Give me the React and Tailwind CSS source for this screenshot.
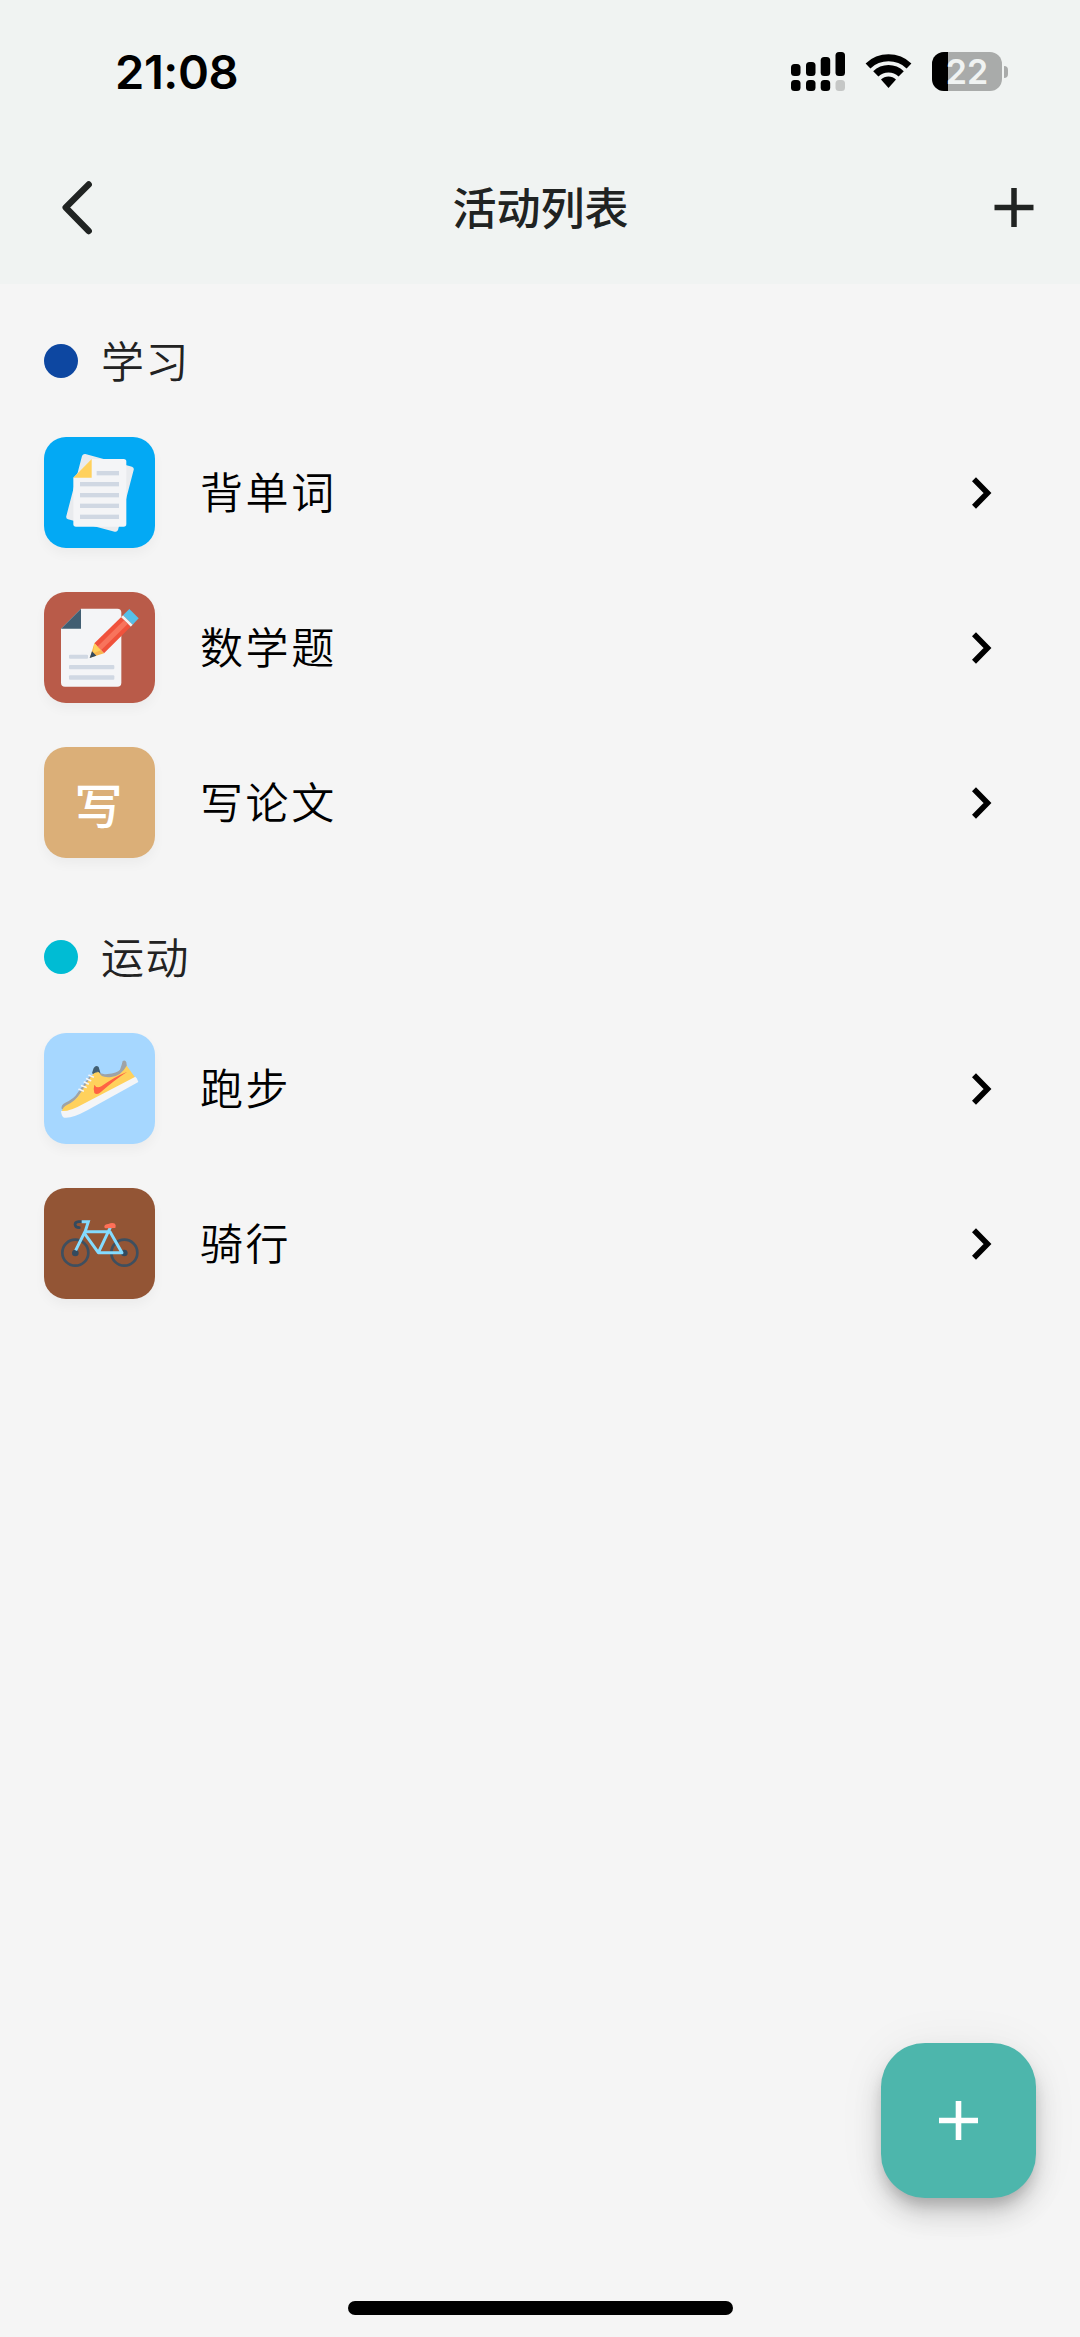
import { clsx } from 'clsx';

const WordsIcon = () => (
  <svg viewBox="0 0 333 333" className="size-full">
    <path d="M124 51 L264 89 Q271 92 269 99 L222 279 Q219 286 212 284 L72 247 Q65 244 67 237 L114 57 Q117 50 124 51Z" fill="#e9ebee" />
    <path d="M143 66 H239 Q247 66 247 74 V261 Q247 269 239 269 H96 Q88 269 88 261 V122Z" fill="#f4f5f7" />
    <path d="M143 66 V122 H88Z" fill="#ffd15c" />
    <g fill="#d0d8e3">
      <rect x="158" y="102" width="67" height="13" />
      <rect x="108" y="135" width="117" height="13" />
      <rect x="108" y="168" width="117" height="13" />
      <rect x="108" y="200" width="117" height="13" />
      <rect x="108" y="233" width="117" height="13" />
    </g>
  </svg>
);

const MathIcon = () => (
  <svg viewBox="0 0 333 333" className="size-full">
    <path d="M111 50 H220 Q232 50 232 62 V272 Q232 284 220 284 H63 Q51 284 51 272 V110Z" fill="#f4f5f7" />
    <path d="M111 50 V110 H51Z" fill="#415e72" />
    <g fill="#d0d8e3">
      <rect x="75" y="188" width="57" height="12" rx="3" />
      <rect x="75" y="219" width="136" height="13" rx="3" />
      <rect x="75" y="250" width="136" height="13" rx="3" />
    </g>
    <path d="M256 51 L284 79 L266 98 L237 70Z" fill="#56c0e8" />
    <path d="M237 70 L266 98 L260 104 L231 76Z" fill="#f2f2f2" />
    <path d="M231 76 L260 104 L180 184 L151 154Z" fill="#f0523c" />
    <path d="M240 85 L251 96 L171 175 L160 164Z" fill="#f8745c" />
    <path d="M151 154 L180 184 L138 197Z" fill="#f9b54c" />
    <path d="M151 154 L160 164 L171 175 L147 184Z" fill="#ffd15c" />
    <path d="M144 178 L157 191 L137 198Z" fill="#334a5e" />
  </svg>
);

const RunIcon = () => (
  <svg viewBox="0 0 333 333" className="size-full">
    <path d="M144 121 L149 105 Q156 95 164 102 L170 122 L160 130Z" fill="#415e72" />
    <path d="M236 84 Q244 79 247 88 L250 110 L230 136 L170 134 L158 115 Q170 126 190 123 Q220 120 228 110 Q233 98 236 84Z" fill="#9fa3a6" />
    <path d="M53 228 Q50 216 64 209 Q90 198 100 181 L140 125 L150 130 L70 232Z" fill="#9fa3a6" />
    <path d="M54 234 Q56 222 70 215 Q95 203 108 182 L142 130 Q150 116 165 118 Q170 136 202 132 Q232 128 248 98 L274 134 L272 144 L118 222 Q80 240 54 234Z" fill="#ffd15c" />
    <path d="M51 234 Q75 237 119 212 L274 131 Q279 134 283 147 L130 232 Q82 258 60 254 Q52 250 51 234Z" fill="#f4f5f7" />
    <path d="M151 155 Q158 168 172 160 Q210 132 250 116 Q215 138 168 179 Q158 186 151 180 Q147 170 151 155Z" fill="#ff6243" />
    <g stroke="#f4f5f7" strokeWidth="5" strokeLinecap="round">
      <path d="M135 127 L148 132" />
      <path d="M128 137 L140 143" />
      <path d="M121 147 L133 153" />
      <path d="M113 158 L126 163" />
      <path d="M105 169 L118 174" />
    </g>
  </svg>
);

const BikeIcon = () => (
  <svg viewBox="0 0 333 333" className="size-full" fill="none">
    <circle cx="94" cy="194" r="39" stroke="#3e4f5f" strokeWidth="8" />
    <circle cx="241" cy="194" r="39" stroke="#3e4f5f" strokeWidth="8" />
    <circle cx="94" cy="195" r="10" fill="#334a5e" />
    <circle cx="241" cy="195" r="10" fill="#334a5e" />
    <path d="M115 101 H104 Q93 102 93 110 Q94 119 106 119" stroke="#334a5e" strokeWidth="8" strokeLinecap="round" />
    <path d="M113 101 H133 L124 129 L95 187" stroke="#84dbff" strokeWidth="9" />
    <path d="M122 131 H198 L234 194 H163 L122 137 M163 194 L199 118" stroke="#84dbff" strokeWidth="9" strokeLinejoin="round" />
    <path d="M181 115 Q182 109 193 108 Q204 103 213 107 Q217 112 214 120 L184 121 Q180 120 181 115Z" fill="#ff7058" />
  </svg>
);

const SECTIONS = [
  {
    name: '学习',
    dot: 'bg-[#0d47a1]',
    items: [
      { name: '背单词', tile: 'bg-[#03a9f4]', icon: <WordsIcon /> },
      { name: '数学题', tile: 'bg-[#b95b49]', icon: <MathIcon /> },
      { name: '写论文', tile: 'bg-[#dbaf78]', letter: '写' },
    ],
  },
  {
    name: '运动',
    dot: 'bg-[#00bcd4]',
    items: [
      { name: '跑步', tile: 'bg-[#a6d7ff]', icon: <RunIcon /> },
      { name: '骑行', tile: 'bg-[#935535]', icon: <BikeIcon /> },
    ],
  },
];

const StatusBar = () => (
  <div className="flex h-[143px] items-center justify-between pl-[115px] pr-[72px]">
    <span className="font-['Inter'] text-[47px] leading-none font-semibold tracking-[-0.4px] text-black">21:08</span>
    <div className="flex items-center">
      <svg width="54" height="39" viewBox="0 0 54 39" className="mr-[20px]">
        <rect x="0" y="12" width="9.5" height="12" rx="3.5" />
        <rect x="15" y="10" width="9.5" height="14" rx="3.5" />
        <rect x="29.7" y="5" width="9.5" height="19" rx="3.5" />
        <rect x="44.5" y="0" width="9.5" height="24" rx="3.5" />
        <rect x="0" y="28" width="9.5" height="11" rx="3.5" />
        <rect x="15" y="28" width="9.5" height="11" rx="3.5" />
        <rect x="29.7" y="28" width="9.5" height="11" rx="3.5" />
        <rect x="44.5" y="28" width="9.5" height="11" rx="3.5" fill="#c5c7c6" />
      </svg>
      <svg width="47" height="39" viewBox="0 0 47 39" className="mr-[20px]">
        <path d="M0.6 11.4 A33 33 0 0 1 46.4 11.4 L41.6 16.4 A26.5 26.5 0 0 0 5.4 16.4Z" />
        <path d="M8.2 19.2 A22 22 0 0 1 38.8 19.2 L33.6 24.6 A14.8 14.8 0 0 0 13.4 24.6Z" />
        <path d="M16 27.6 A10.6 10.6 0 0 1 31 27.6 L23.5 36Z" />
      </svg>
      <div className="relative flex h-[39px] w-[70px] items-center justify-center overflow-hidden rounded-[12px] bg-[#a9abaa]">
        <div className="absolute inset-y-0 left-0 w-[16px] bg-black" />
        <span className="relative font-['Inter'] text-[34px] leading-none font-semibold text-[#f0f3f2]">22</span>
      </div>
      <div className="ml-[2px] h-[12px] w-[4px] rounded-r-full bg-[#a9abaa]" />
    </div>
  </div>
);

const Header = () => (
  <header className="flex h-[141px] items-start justify-between pl-[60px] pr-[44px] text-[#202322]">
    <button className="mt-[36px]" aria-label="返回">
      <svg width="34" height="57" viewBox="0 0 34 57" fill="none" stroke="currentColor" strokeWidth="6.4" strokeLinecap="round" strokeLinejoin="round">
        <path d="M28.7 5.5 L5.7 28.5 L28.7 52" />
      </svg>
    </button>
    <h1 className="mt-[33px] mr-[5px] text-[44px] leading-[60px] font-medium">活动列表</h1>
    <button className="mt-[45px]" aria-label="添加">
      <svg width="44" height="39" viewBox="0 0 44 39" stroke="currentColor" strokeWidth="5.5">
        <path d="M2.5 19.5 H41.5 M22 0 V39" />
      </svg>
    </button>
  </header>
);

const ActivityRow = ({ item }) => (
  <li className="flex h-[155px] items-center">
    <div
      className={clsx(
        'flex size-[111px] items-center justify-center overflow-hidden rounded-[22px] shadow-[0_6px_12px_rgba(0,0,0,0.04)]',
        item.tile
      )}
    >
      {item.icon || <span className="mr-[2px] text-[48px] leading-none font-medium text-white">{item.letter}</span>}
    </div>
    <span className="-mt-[5px] ml-[45px] text-[43px] leading-[60px] font-[350] tracking-[2.6px] text-black">{item.name}</span>
    <svg width="24" height="34" viewBox="0 0 24 34" className="mr-[42px] ml-auto" fill="none" stroke="black" strokeWidth="5.6">
      <path d="M4 3.3 L17.5 17 L4 30.7" />
    </svg>
  </li>
);

export default function App() {
  return (
    <div className="flex h-[2337px] w-[1080px] flex-col bg-[#f5f5f5] font-['Noto_Sans_CJK_SC',sans-serif]">
      <div className="bg-[#f0f3f2]">
        <StatusBar />
        <Header />
      </div>

      <main className="grow px-[44px] pt-[31px]">
        {SECTIONS.map((section) => (
          <section key={section.name} className="mb-[31px]">
            <div className="flex h-[92px] items-center">
              <span className={clsx('size-[34px] rounded-full', section.dot)} />
              <h2 className="-mt-[5px] ml-[23px] text-[43px] leading-[60px] font-[350] tracking-[1.6px] text-[#222]">{section.name}</h2>
            </div>
            <ul className="mt-[8px]">
              {section.items.map((item) => (
                <ActivityRow key={item.name} item={item} />
              ))}
            </ul>
          </section>
        ))}
      </main>

      <button
        aria-label="新建活动"
        className="mr-[44px] mb-[103px] flex size-[155px] items-center justify-center self-end rounded-[44px] bg-[#4db6ac] shadow-[0_10px_14px_-3px_rgba(0,0,0,0.18),0_17px_28px_rgba(0,0,0,0.14),0_3px_50px_rgba(0,0,0,0.06)]"
      >
        <svg width="39" height="39" viewBox="0 0 39 39" stroke="white" strokeWidth="5.6">
          <path d="M0 19.5 H39 M19.5 0 V39" />
        </svg>
      </button>
      <div className="mb-[22px] h-[14px] w-[385px] self-center rounded-full bg-black" />
    </div>
  );
}
